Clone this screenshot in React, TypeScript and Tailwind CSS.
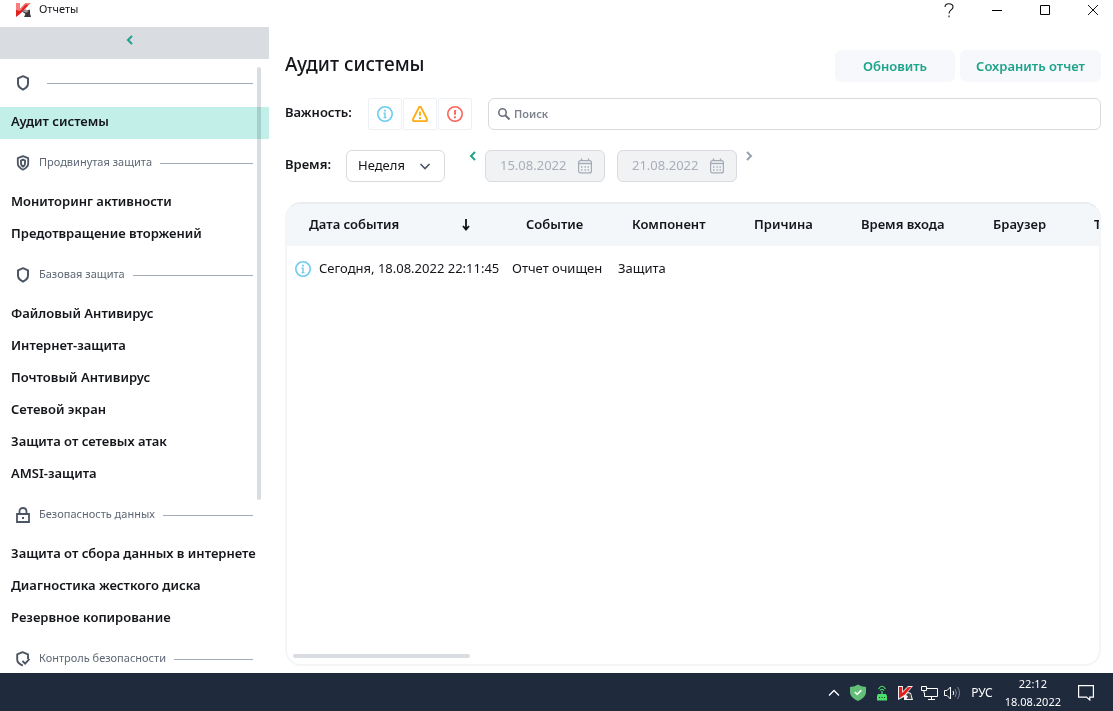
import type { ReactNode } from "react";

type IconProps = { className?: string };

function AppLogo({ className }: IconProps) {
  return (
    <svg viewBox="0 0 15 14" className={className} aria-hidden="true">
      <path d="M0 0h4v6L9.500 0h5L8 7 4 11 0 14z" fill="#e0211f" />
      <path d="M0 0h4v6L9.500 0h5L13 1.700H9.500L4 8 0 7z" fill="#f47f7b" />
      <path d="M6 8.500l3.500-2 2 1 2.500-1v4l1 3.500H8l1.500-3z" fill="#3b3738" />
      <path d="M7 8.500l2.500-2 3 1.500-1.500 1.500H9z" fill="#a39fa0" />
    </svg>
  );
}

function Shield({ className }: IconProps) {
  return (
    <svg viewBox="0 0 14 16" className={className} fill="none" stroke="#4b5563" strokeWidth="2" aria-hidden="true">
      <path d="M7 1.200L12 3.400V8.600C12 11.400 10 13.300 7 14.700C4 13.300 2 11.400 2 8.600V3.400Z" strokeLinejoin="round" />
    </svg>
  );
}

function ShieldDouble({ className }: IconProps) {
  return (
    <svg viewBox="0 0 14 16" className={className} fill="none" stroke="#4b5563" aria-hidden="true">
      <path d="M7 1.200L12.200 3.200V8.600C12.200 11.400 10 13.300 7 14.700C4 13.300 1.800 11.400 1.800 8.600V3.200Z" strokeWidth="1.800" strokeLinejoin="round" />
      <path d="M7 4.600L9 5.600V8.600C9 10.100 8.400 11 7 11.600C5.600 11 5 10.100 5 8.600V5.600Z" strokeWidth="1.900" />
    </svg>
  );
}

function Lock({ className }: IconProps) {
  return (
    <svg viewBox="0 0 14 16" className={className} fill="none" stroke="#4b5563" strokeWidth="1.800" aria-hidden="true">
      <path d="M1 7h12v8H1z" />
      <path d="M3.500 7V4.500C3.500 2.400 4.800 1 7 1S10.500 2.400 10.500 4.500V7" />
      <path d="M6 11h2" strokeWidth="2" />
    </svg>
  );
}

function ShieldCheck({ className }: IconProps) {
  return (
    <svg viewBox="0 0 14 16" className={className} fill="none" stroke="#4b5563" strokeWidth="1.900" aria-hidden="true">
      <path d="M12 8V3.400L6.500 1.200L1.200 3.400V8.600C1.200 11.400 3.600 13.300 6.800 14.700" strokeLinejoin="round" />
      <path d="M6.500 10l2.600 2.600L13.500 8" />
    </svg>
  );
}

function Chevron({ dir, className }: IconProps & { dir: "left" | "right" | "down" | "up" }) {
  const paths = {
    left: "M8 2L4 6L8 10",
    right: "M4 2L8 6L4 10",
    down: "M1.500 4L6 8.500L10.500 4",
    up: "M1 8.500L6 3.500L11 8.500",
  };
  return (
    <svg viewBox="0 0 12 12" className={className} fill="none" stroke="currentColor" aria-hidden="true">
      <path d={paths[dir]} />
    </svg>
  );
}

function InfoIcon({ className }: IconProps) {
  return (
    <svg viewBox="0 0 16 16" className={className} fill="none" stroke="#6ccbef" aria-hidden="true">
      <circle cx="8" cy="8" r="7.200" strokeWidth="1.600" />
      <path d="M8 3.800v1.800" strokeWidth="1.800" />
      <path d="M6.500 7.300H8V12M6.500 11.600h3" strokeWidth="1.400" />
    </svg>
  );
}

function WarningIcon({ className }: IconProps) {
  return (
    <svg viewBox="0 0 16 16" className={className} fill="none" stroke="#fdac12" aria-hidden="true">
      <path d="M6.900 1.500Q8 0 9.100 1.500L15 13Q15.500 15 13.800 15.200H2.200Q0.500 15 1 13Z" strokeWidth="1.800" strokeLinejoin="round" />
      <path d="M8 5.500v4.300M8 11v2" strokeWidth="1.900" />
    </svg>
  );
}

function CriticalIcon({ className }: IconProps) {
  return (
    <svg viewBox="0 0 16 16" className={className} fill="none" stroke="#fb655d" aria-hidden="true">
      <circle cx="8" cy="8" r="7.200" strokeWidth="1.600" />
      <path d="M8 4v4.800M8 10.300v1.900" strokeWidth="1.900" />
    </svg>
  );
}

function SearchIcon({ className }: IconProps) {
  return (
    <svg viewBox="0 0 12 12" className={className} fill="none" stroke="#6b7280" aria-hidden="true">
      <circle cx="4.500" cy="4.500" r="3.700" strokeWidth="1.600" />
      <path d="M7 7l4.500 4.500" strokeWidth="2" />
    </svg>
  );
}

function CalendarIcon({ className }: IconProps) {
  return (
    <svg viewBox="0 0 14 16" className={className} fill="none" stroke="#a4abb5" aria-hidden="true">
      <rect x="0.600" y="2.600" width="12.800" height="12.300" rx="2" strokeWidth="1.200" />
      <path d="M0.600 5.500h12.800" strokeWidth="1.400" />
      <path d="M3.500 0.500v2M10.500 0.500v2" strokeWidth="1.400" />
      <path d="M6.500 9h1.400M9.500 9h1.400M3 12h1.400M6.500 12h1.400M9.500 12h1.400M3 9h1.400" strokeWidth="1.300" />
    </svg>
  );
}

const groups: { title: string; icon: ReactNode; items: string[] }[] = [
  { title: "", icon: <Shield className="h-4 w-3.5" />, items: ["Аудит системы"] },
  {
    title: "Продвинутая защита",
    icon: <ShieldDouble className="h-4 w-3.5" />,
    items: ["Мониторинг активности", "Предотвращение вторжений"],
  },
  {
    title: "Базовая защита",
    icon: <Shield className="h-4 w-3.5" />,
    items: [
      "Файловый Антивирус",
      "Интернет-защита",
      "Почтовый Антивирус",
      "Сетевой экран",
      "Защита от сетевых атак",
      "AMSI-защита",
    ],
  },
  {
    title: "Безопасность данных",
    icon: <Lock className="h-4 w-3.5" />,
    items: ["Защита от сбора данных в интернете", "Диагностика жесткого диска", "Резервное копирование"],
  },
  { title: "Контроль безопасности", icon: <ShieldCheck className="h-4 w-3.5" />, items: [] },
];

const columns = [
  { title: "Дата события", width: "w-[217px]" },
  { title: "Событие", width: "w-[106px]" },
  { title: "Компонент", width: "w-[122px]" },
  { title: "Причина", width: "w-[107px]" },
  { title: "Время входа", width: "w-[132px]" },
  { title: "Браузер", width: "w-[101px]" },
  { title: "Тип", width: "w-[100px]" },
];

function TitleBar() {
  return (
    <header className="flex h-[27px] shrink-0 items-start justify-between">
      <div className="flex items-start gap-2 pl-4">
        <AppLogo className="mt-[3px] h-3.5 w-[15px]" />
        <span className="pt-px text-[11px] leading-4">Отчеты</span>
      </div>
      <div className="-mr-1 flex h-5 items-center">
        <button aria-label="Справка" className="flex h-5 w-12 items-center justify-center">
          <svg viewBox="0 0 10 15" className="h-[15px] w-2.5" fill="none" stroke="#111" strokeWidth="1.100">
            <path d="M1 4C1 1.800 2.600 0.700 4.800 0.700S9 1.900 9 3.900C9 6.900 5 7 5 10.500M5 12.500v1.800" />
          </svg>
        </button>
        <button aria-label="Свернуть" className="flex h-5 w-12 items-center justify-center">
          <svg viewBox="0 0 10 10" className="size-2.5" stroke="#000">
            <path d="M0 5.500h10" />
          </svg>
        </button>
        <button aria-label="Развернуть" className="flex h-5 w-12 items-center justify-center">
          <svg viewBox="0 0 10 10" className="size-2.5" fill="none" stroke="#000">
            <path d="M0.500 0.500h9v9h-9z" />
          </svg>
        </button>
        <button aria-label="Закрыть" className="flex h-5 w-12 items-center justify-center">
          <svg viewBox="0 0 10 10" className="size-2.5" stroke="#111">
            <path d="M0 0l10 10M10 0L0 10" />
          </svg>
        </button>
      </div>
    </header>
  );
}

function Sidebar() {
  return (
    <aside className="relative flex w-[269px] shrink-0 flex-col">
      <button aria-label="Свернуть панель" className="flex h-8 shrink-0 items-center justify-center bg-[#d9dce1] pr-2.5 pb-1.5 text-[#1fa38a]">
        <Chevron dir="left" className="size-3 stroke-2" />
      </button>
      <nav className="min-h-0 flex-1 overflow-hidden">
        {groups.map((group, i) => (
          <section key={i}>
            <h2 className="flex h-12 items-center pr-4 pl-4 text-[11px] text-[#5d6774]">
              {group.icon}
              <span className="mr-2 ml-[9px] pb-0.5">{group.title}</span>
              <span className="h-px flex-1 bg-[#a3abb4]" />
            </h2>
            {group.items.map((item) => (
              <a
                key={item}
                href="#"
                className={
                  item === "Аудит системы"
                    ? "flex h-8 items-center bg-[#c2f0e8] pb-0.5 pl-[11px] text-[13px] font-semibold whitespace-nowrap"
                    : "flex h-8 items-center pb-0.5 pl-[11px] text-[13px] font-semibold whitespace-nowrap"
                }
              >
                {item}
              </a>
            ))}
          </section>
        ))}
      </nav>
      <div className="absolute top-10 left-[257px] h-[433px] w-1 rounded-full bg-[#d9dce1] mix-blend-multiply" />
    </aside>
  );
}

function DateField({ label, value }: { label: string; value: string }) {
  return (
    <label className="flex h-8 w-[120px] items-center rounded-md border border-[#d8dce0] bg-[#f0f2f4] pr-3 pl-3.5">
      <input
        aria-label={label}
        defaultValue={value}
        disabled
        className="min-w-0 flex-1 bg-transparent text-[13px] text-[#a9afb8]"
      />
      <CalendarIcon className="h-4 w-3.5 shrink-0" />
    </label>
  );
}

function Filters() {
  const severity = "flex h-8 w-[34px] items-center justify-center rounded-xs border border-[#edf1f5]";
  return (
    <>
      <div className="mt-4 flex h-8 items-center">
        <span className="w-[83px] pb-0.5 text-[13px] font-semibold">Важность:</span>
        <div className="flex gap-px">
          <button aria-label="Информация" className={severity}>
            <InfoIcon className="size-4" />
          </button>
          <button aria-label="Предупреждение" className={severity}>
            <WarningIcon className="size-4" />
          </button>
          <button aria-label="Критическое" className={severity}>
            <CriticalIcon className="size-4" />
          </button>
        </div>
        <label className="ml-4 flex h-8 flex-1 items-center gap-1 rounded-md border border-[#d7dbdf] px-[9px]">
          <SearchIcon className="size-3" />
          <input
            type="text"
            aria-label="Поиск"
            placeholder="Поиск"
            className="min-w-0 flex-1 text-[11px] font-semibold outline-none placeholder:text-[#7d838c]"
          />
        </label>
      </div>
      <div className="mt-5 flex h-8 items-center">
        <label htmlFor="period" className="w-[61px] pb-0.5 text-[13px] font-semibold">
          Время:
        </label>
        <div className="relative h-8 w-[99px]">
          <select id="period" className="h-8 w-full appearance-none rounded-md border border-[#d7dbdf] bg-white px-[11px] text-[13px]">
            <option>Неделя</option>
          </select>
          <Chevron dir="down" className="pointer-events-none absolute top-2.5 right-3.5 size-3 stroke-[1.6] text-[#4b5563]" />
        </div>
        <button aria-label="Предыдущий период" className="ml-[22px] self-start text-[#1fa38a]">
          <Chevron dir="left" className="mr-1.5 size-3 stroke-2" />
        </button>
        <DateField label="Начало периода" value="15.08.2022" />
        <div className="w-3" />
        <DateField label="Конец периода" value="21.08.2022" />
        <button aria-label="Следующий период" className="ml-1.5 self-start text-[#9aa1ac]">
          <Chevron dir="right" className="size-3 stroke-2" />
        </button>
      </div>
    </>
  );
}

function ReportTable() {
  return (
    <section className="mt-5 flex min-h-0 flex-1 flex-col overflow-hidden rounded-2xl border-2 border-[#f3f5f6] border-t-[#e9edf0]">
      <div className="min-h-0 flex-1 overflow-hidden">
        <table className="w-[885px] table-fixed border-collapse text-left text-[13px] whitespace-nowrap">
          <thead>
            <tr className="h-[42px] bg-[#f3f7fa]">
              {columns.map((column, i) => (
                <th key={column.title} className={`${column.width} pl-[22px] font-semibold`}>
                  <span className="flex items-center justify-between">
                    {column.title}
                    {i === 0 && (
                      <svg viewBox="0 0 8 12" className="mr-[34px] h-3 w-2" fill="none" stroke="#111" strokeWidth="1.800" aria-hidden="true">
                        <path d="M4 0v10M1 7l3 3.500L7 7" />
                      </svg>
                    )}
                  </span>
                </th>
              ))}
            </tr>
          </thead>
          <tbody>
            <tr className="h-[45px]">
              <td className="pl-2">
                <span className="flex items-center gap-2">
                  <InfoIcon className="size-4 shrink-0" />
                  Сегодня, 18.08.2022 22:11:45
                </span>
              </td>
              <td className="pl-2">Отчет очищен</td>
              <td className="pl-2">Защита</td>
              <td />
              <td />
              <td />
              <td />
            </tr>
          </tbody>
        </table>
      </div>
      <div className="mb-1.5 ml-1.5 h-1 w-[177px] shrink-0 rounded-full bg-[#d9dde2]" />
    </section>
  );
}

function Taskbar() {
  return (
    <footer className="flex h-[38px] shrink-0 items-center justify-end bg-[#1f2a3d] pt-px pr-[19px] text-[11px] text-white">
      <Chevron dir="up" className="size-3 stroke-[1.3]" />
      <svg viewBox="0 0 16 17" className="ml-2.5 h-[17px] w-4" aria-hidden="true">
        <path d="M8 0.500Q11 2.500 16 3V8C16 12 12 15.500 8 17C4 15.500 0 12 0 8V3Q5 2.500 8 0.500Z" fill="#63bf77" />
        <path d="M4.800 8l2.400 2.400L11.300 6.300" fill="none" stroke="#fff" strokeWidth="1.600" />
      </svg>
      <svg viewBox="0 0 12 16" className="ml-2.5 h-4 w-3" fill="none" stroke="#4be06a" strokeWidth="1.200" aria-hidden="true">
        <path d="M2.500 4Q6 -1.500 9.500 4M4 5.500Q6 3 8 5.500M6 6v4" />
        <path d="M2 9h8l1 2v4.500H1V11z" fill="#4be06a" stroke="none" />
        <path d="M3 12.500h1M5.500 12.500h1M8 12.500h1" stroke="#1f2a3d" />
      </svg>
      <svg viewBox="0 0 15 14" className="ml-2.5 h-3.5 w-[15px]" aria-hidden="true">
        <path d="M0 0h5v5L10 0h5L10 6l3 1 2 7H6V11L0 14z" fill="#f3f1f1" />
        <path d="M1 1h3.200v6L10 1h3.500L7 8.500 1 12.500z" fill="#e0211f" />
        <path d="M8 9l2-2 2.500 1 1 5H8.500l1.500-2.500z" fill="#4a4647" />
      </svg>
      <svg viewBox="0 0 17 14" className="ml-2 h-3.5 w-[17px]" fill="none" stroke="#fff" aria-hidden="true">
        <path d="M5.500 2.500h11v8H3.500V7M7 13.500h7M10.500 10.500v3" />
        <path d="M0.500 0.500h5v4h-5zM3 4.500V7" />
      </svg>
      <svg viewBox="0 0 17 14" className="ml-1.5 h-3.5 w-[17px]" fill="none" stroke="#fff" aria-hidden="true">
        <path d="M0.500 4.500H3L6.500 1v12L3 9.500H0.500z" />
        <path d="M9 5q1.500 2 0 4" />
        <path d="M11 3q3 4 0 8M13.500 1q4 6 0 12" stroke="#7c8494" />
      </svg>
      <span className="ml-2.5 text-xs">РУС</span>
      <div className="ml-3 text-center leading-[18px]">
        <div>22:12</div>
        <div>18.08.2022</div>
      </div>
      <svg viewBox="0 0 16 16" className="ml-[17px] size-4" fill="none" stroke="#fff" strokeWidth="1.200" aria-hidden="true">
        <path d="M0.600 0.600h14.800v11.500h-3.600V15L8.500 12.100H0.600z" />
      </svg>
    </footer>
  );
}

export default function App() {
  return (
    <div className="flex h-screen flex-col overflow-hidden bg-white font-['Noto_Sans','Open_Sans',sans-serif] text-[#14161c]">
      <TitleBar />
      <div className="flex min-h-0 flex-1">
        <Sidebar />
        <main className="flex min-w-0 flex-1 flex-col pt-[23px] pr-3 pb-[7px] pl-4">
          <div className="flex h-8 items-center">
            <h1 className="flex-1 pb-1 text-[19px] font-medium">Аудит системы</h1>
            <button className="h-8 w-[120px] rounded-md bg-[#f6f8fb] pt-px text-[13px] font-semibold text-[#1fa38a]">Обновить</button>
            <button className="ml-[5px] h-8 w-[141px] rounded-md bg-[#f6f8fb] pt-px text-[13px] font-semibold text-[#1fa38a]">
              Сохранить отчет
            </button>
          </div>
          <Filters />
          <ReportTable />
        </main>
      </div>
      <Taskbar />
    </div>
  );
}
